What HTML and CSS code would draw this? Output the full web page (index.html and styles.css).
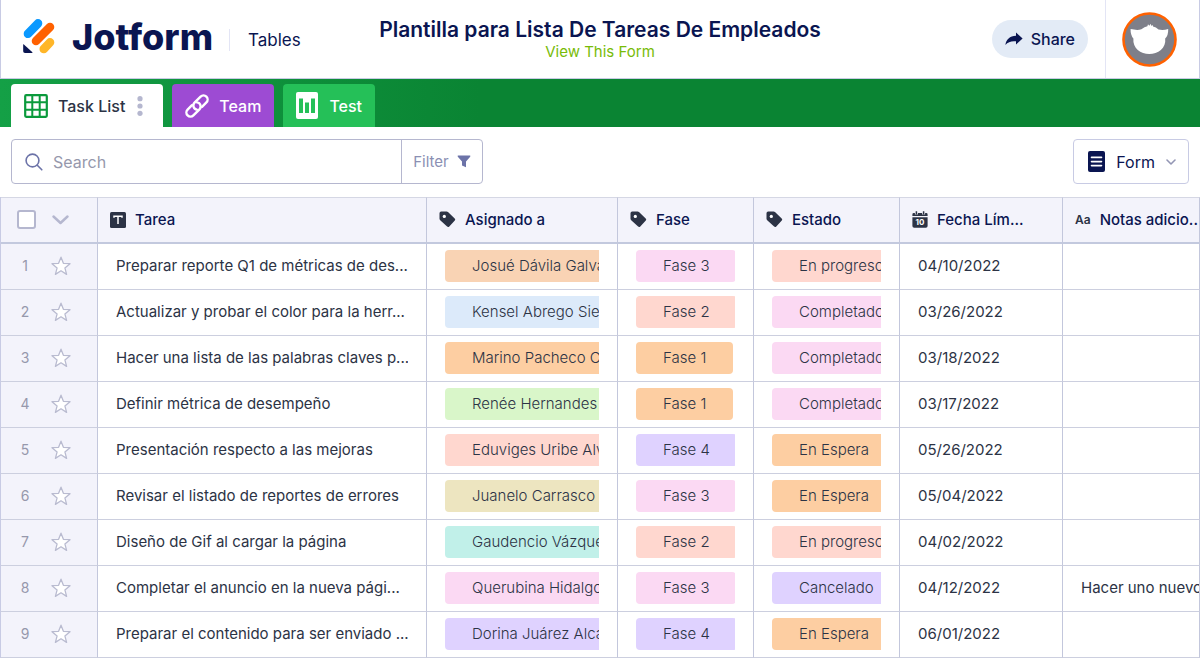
FILE: index.html
```
<!DOCTYPE html>
<html lang="es">
<head>
<meta charset="utf-8">
<meta name="viewport" content="width=device-width, initial-scale=1">
<title>Plantilla para Lista De Tareas De Empleados</title>
<link rel="stylesheet" href="styles.css">
</head>
<body>
<svg class="defs" width="0" height="0" aria-hidden="true">
  <symbol id="star" viewBox="0 0 20 20"><path d="M10 1.2 12.4 7.3 19 7.7 13.9 11.9 15.6 18.4 10 14.8 4.4 18.4 6.1 11.9 1 7.7 7.6 7.3Z" fill="#fff" stroke="#b9bbd0" stroke-width="1.3" stroke-linejoin="round"/></symbol>
  <symbol id="tag" viewBox="0 0 17 17"><path d="M2.2 0.5H7.6Q8.4 0.5 9 1.1L15.7 7.4Q16.8 8.5 15.8 9.6L10.3 15.4Q9.2 16.5 8.1 15.5L1.2 9.2Q0.5 8.6 0.5 7.7V2.2Q0.5 0.5 2.2 0.5Z" fill="#2c3345"/><circle cx="5.3" cy="5.4" r="1.6" fill="#fff"/></symbol>
</svg>

<header class="header">
  <a class="brand" href="#">
    <svg class="brand-mark" width="32" height="36" viewBox="0 0 32 36" aria-hidden="true">
      <g fill="none" stroke-width="8.6" stroke-linecap="round">
        <path d="M5 15.8 15 5.4" stroke="#0a99ff"/>
        <path d="M13 23 27 9" stroke="#ff6100"/>
        <path d="M20.8 31 27 24.4" stroke="#ffb629"/>
      </g>
      <path d="M0.6 26.2 9.4 34.2Q9.8 35 9 35H2Q0.2 35 0.2 33.2V26.6Q0.2 26 0.6 26.2Z" fill="#0a1551"/>
    </svg>
    <span class="brand-name">Jotform</span>
    <span class="brand-product">Tables</span>
  </a>
  <div class="heading">
    <h1 class="title">Plantilla para Lista De Tareas De Empleados</h1>
    <a class="subtitle" href="#">View This Form</a>
  </div>
  <div class="account">
    <button class="share" type="button">
      <svg width="18" height="14" viewBox="0 0 18 14" aria-hidden="true"><path d="M11 0.4 17.6 6.4 11 12.6V9.3C6.5 8.8 3 9.8 0.4 13C1 7.5 4.8 4 11 3.7Z" fill="#0a1551"/></svg>
      Share
    </button>
    <a class="avatar" href="#" aria-label="Account">
      <svg width="55" height="55" viewBox="0 0 55 55" aria-hidden="true">
        <circle cx="27.5" cy="27.5" r="26" fill="#7e7f89" stroke="#ff6100" stroke-width="2.6"/>
        <path d="M8.6 17C12.5 17.8 16 18.4 19.4 17.2Q22.5 14.7 25.4 14.2L26 12.2 27.3 13.7 28.8 11.8 29.2 13.8 31 13.2 31 14.6Q34 15.2 36.5 17.4C40 18.3 43 17.8 46.2 17Q46.4 23.5 43.2 26.6C44.4 36.5 35.8 42 27.3 42C18.8 42 10.4 36.5 11.4 26.6Q8.4 23.2 8.6 17Z" fill="#fff"/>
      </svg>
    </a>
  </div>
</header>

<nav class="tabs" aria-label="Tables">
  <div class="tab tab-active">
    <a class="tab-link" href="#">
      <svg width="24" height="24" viewBox="0 0 24 24" aria-hidden="true"><rect x="1.2" y="1.2" width="21.6" height="21.6" rx="1" fill="#fff" stroke="#0b9a3c" stroke-width="2.2"/><path d="M8.3 1V23M15.7 1V23M1 8.3H23M1 15.7H23" stroke="#0b9a3c" stroke-width="2"/></svg>
      Task List
    </a>
    <button class="tab-menu" type="button" aria-label="Tab options">
      <svg width="6" height="20" viewBox="0 0 6 20" fill="#b5b7cf" aria-hidden="true"><circle cx="3" cy="2.7" r="2.6"/><circle cx="3" cy="10" r="2.6"/><circle cx="3" cy="17.3" r="2.6"/></svg>
    </button>
  </div>
  <a class="tab tab-team" href="#">
    <svg width="24" height="24" viewBox="0 0 24 24" fill="none" stroke="#fff" stroke-width="2.4" stroke-linecap="round" aria-hidden="true"><g transform="rotate(-45 12 12)"><path d="M15 16.1H21.2A4.1 4.1 0 0 0 21.2 7.9H12.6A4.1 4.1 0 0 0 9.4 14.5"/><path d="M9 7.9H2.8A4.1 4.1 0 0 0 2.8 16.1H11.4A4.1 4.1 0 0 0 14.6 9.5"/></g></svg>
    Team
  </a>
  <a class="tab tab-test" href="#">
    <svg width="22" height="27" viewBox="0 0 22 27" aria-hidden="true"><rect width="22" height="27" rx="2" fill="#fff"/><path d="M3 6.5H7V21H3ZM9 10.5H13V21H9ZM15 6.5H19V21H15Z" fill="#25c058"/></svg>
    Test
  </a>
</nav>

<div class="toolbar">
  <div class="search">
    <label class="search-label" for="search">
      <svg width="18" height="18" viewBox="0 0 18 18" fill="none" stroke="#6c73a8" stroke-width="1.6" stroke-linecap="round" role="img" aria-label="Search"><circle cx="7.5" cy="7.5" r="6.4"/><path d="M12.3 12.3 16.8 16.8"/></svg>
    </label>
    <input class="search-input" id="search" type="text" placeholder="Search">
    <button class="filter" type="button">
      Filter
      <svg width="14" height="13" viewBox="0 0 14 13" aria-hidden="true"><path d="M1.2 0.5H12.8Q13.8 0.6 13.2 1.7L9 6.6V12.2L5 10.4V6.6L0.8 1.7Q0.2 0.6 1.2 0.5Z" fill="#6c73a8"/></svg>
    </button>
  </div>
  <button class="form-button" type="button">
    <svg width="17" height="21" viewBox="0 0 17 21" aria-hidden="true"><rect width="17" height="21" rx="2" fill="#0a1551"/><path d="M3.5 6.4H13.5M3.5 10.6H13.5M3.5 14.6H13.5" stroke="#fff" stroke-width="1.6" stroke-linecap="round"/></svg>
    Form
    <svg width="10" height="6" viewBox="0 0 10 6" fill="none" stroke="#9396b4" stroke-width="1.6" stroke-linecap="round" stroke-linejoin="round" aria-hidden="true"><path d="M1 1 5 5 9 1"/></svg>
  </button>
</div>

<table class="grid">
  <colgroup><col class="col-select"><col class="col-task"><col class="col-owner"><col class="col-phase"><col class="col-status"><col class="col-date"><col></colgroup>
  <thead>
    <tr>
      <th><div class="select-all"><input class="check" type="checkbox" aria-label="Select all"><button class="chevron" type="button" aria-label="Selection options"><svg width="17" height="10" viewBox="0 0 17 10" fill="none" stroke="#b5b7cf" stroke-width="2.4" stroke-linecap="round" stroke-linejoin="round" aria-hidden="true"><path d="M1.5 1.5 8.5 8 15.5 1.5"/></svg></button></div></th>
      <th scope="col"><div class="col-head"><svg width="16" height="16" viewBox="0 0 16 16" aria-hidden="true"><rect width="16" height="16" rx="1.5" fill="#2c3345"/><path d="M4 5.8V4.2H12V5.8M8 4.2V12" fill="none" stroke="#fff" stroke-width="1.5"/></svg>Tarea</div></th>
      <th scope="col"><div class="col-head"><svg width="17" height="17" aria-hidden="true"><use href="#tag"/></svg>Asignado a</div></th>
      <th scope="col"><div class="col-head"><svg width="17" height="17" aria-hidden="true"><use href="#tag"/></svg>Fase</div></th>
      <th scope="col"><div class="col-head"><svg width="17" height="17" aria-hidden="true"><use href="#tag"/></svg>Estado</div></th>
      <th scope="col"><div class="col-head"><span class="calendar"><svg width="16" height="17" viewBox="0 0 16 17" aria-hidden="true"><path d="M1.8 2H14.2Q15.6 2 15.6 3.4V5H0.4V3.4Q0.4 2 1.8 2ZM0.4 6.2H15.6V15Q15.6 16.8 13.8 16.8H2.2Q0.4 16.8 0.4 15Z" fill="#2c3345"/><path d="M4.4 0.4V3.4M11.6 0.4V3.4" stroke="#f3f3fb" stroke-width="3"/><path d="M4.4 0.2V3.6M11.6 0.2V3.6" stroke="#2c3345" stroke-width="1.5"/></svg><span class="calendar-day" aria-hidden="true">10</span></span>Fecha Lím...</div></th>
      <th scope="col"><div class="col-head"><span class="text-type" aria-hidden="true">Aa</span>Notas adicio..</div></th>
    </tr>
  </thead>
  <tbody>
    <tr><td><div class="row-head"><span class="num">1</span><button class="star" type="button" aria-label="Favorito 1"><svg width="20" height="20"><use href="#star"/></svg></button></div></td><td><div class="cell">Preparar reporte Q1 de métricas de des...</div></td><td><div class="cell"><span class="chip apricot">Josué Dávila Galvá</span></div></td><td><div class="cell"><span class="chip pink">Fase 3</span></div></td><td><div class="cell"><span class="chip salmon">En progreso</span></div></td><td><div class="cell">04/10/2022</div></td><td></td></tr>
    <tr><td><div class="row-head"><span class="num">2</span><button class="star" type="button" aria-label="Favorito 2"><svg width="20" height="20"><use href="#star"/></svg></button></div></td><td><div class="cell">Actualizar y probar el color para la herr...</div></td><td><div class="cell"><span class="chip blue">Kensel Abrego Sier</span></div></td><td><div class="cell"><span class="chip salmon">Fase 2</span></div></td><td><div class="cell"><span class="chip pink">Completado</span></div></td><td><div class="cell">03/26/2022</div></td><td></td></tr>
    <tr><td><div class="row-head"><span class="num">3</span><button class="star" type="button" aria-label="Favorito 3"><svg width="20" height="20"><use href="#star"/></svg></button></div></td><td><div class="cell">Hacer una lista de las palabras claves p...</div></td><td><div class="cell"><span class="chip orange">Marino Pacheco C</span></div></td><td><div class="cell"><span class="chip orange">Fase 1</span></div></td><td><div class="cell"><span class="chip pink">Completado</span></div></td><td><div class="cell">03/18/2022</div></td><td></td></tr>
    <tr><td><div class="row-head"><span class="num">4</span><button class="star" type="button" aria-label="Favorito 4"><svg width="20" height="20"><use href="#star"/></svg></button></div></td><td><div class="cell">Definir métrica de desempeño</div></td><td><div class="cell"><span class="chip green">Renée Hernandes F</span></div></td><td><div class="cell"><span class="chip orange">Fase 1</span></div></td><td><div class="cell"><span class="chip pink">Completado</span></div></td><td><div class="cell">03/17/2022</div></td><td></td></tr>
    <tr><td><div class="row-head"><span class="num">5</span><button class="star" type="button" aria-label="Favorito 5"><svg width="20" height="20"><use href="#star"/></svg></button></div></td><td><div class="cell">Presentación respecto a las mejoras</div></td><td><div class="cell"><span class="chip salmon">Eduviges Uribe Alva</span></div></td><td><div class="cell"><span class="chip violet">Fase 4</span></div></td><td><div class="cell"><span class="chip orange">En Espera</span></div></td><td><div class="cell">05/26/2022</div></td><td></td></tr>
    <tr><td><div class="row-head"><span class="num">6</span><button class="star" type="button" aria-label="Favorito 6"><svg width="20" height="20"><use href="#star"/></svg></button></div></td><td><div class="cell">Revisar el listado de reportes de errores</div></td><td><div class="cell"><span class="chip khaki">Juanelo Carrasco C</span></div></td><td><div class="cell"><span class="chip pink">Fase 3</span></div></td><td><div class="cell"><span class="chip orange">En Espera</span></div></td><td><div class="cell">05/04/2022</div></td><td></td></tr>
    <tr><td><div class="row-head"><span class="num">7</span><button class="star" type="button" aria-label="Favorito 7"><svg width="20" height="20"><use href="#star"/></svg></button></div></td><td><div class="cell">Diseño de Gif al cargar la página</div></td><td><div class="cell"><span class="chip teal">Gaudencio Vázque</span></div></td><td><div class="cell"><span class="chip salmon">Fase 2</span></div></td><td><div class="cell"><span class="chip salmon">En progreso</span></div></td><td><div class="cell">04/02/2022</div></td><td></td></tr>
    <tr><td><div class="row-head"><span class="num">8</span><button class="star" type="button" aria-label="Favorito 8"><svg width="20" height="20"><use href="#star"/></svg></button></div></td><td><div class="cell">Completar el anuncio en la nueva pági...</div></td><td><div class="cell"><span class="chip pink">Querubina Hidalgo</span></div></td><td><div class="cell"><span class="chip pink">Fase 3</span></div></td><td><div class="cell"><span class="chip violet">Cancelado</span></div></td><td><div class="cell">04/12/2022</div></td><td><div class="cell cell-last">Hacer uno nuevo</div></td></tr>
    <tr><td><div class="row-head"><span class="num">9</span><button class="star" type="button" aria-label="Favorito 9"><svg width="20" height="20"><use href="#star"/></svg></button></div></td><td><div class="cell">Preparar el contenido para ser enviado ...</div></td><td><div class="cell"><span class="chip violet">Dorina Juárez Alca</span></div></td><td><div class="cell"><span class="chip violet">Fase 4</span></div></td><td><div class="cell"><span class="chip orange">En Espera</span></div></td><td><div class="cell">06/01/2022</div></td><td></td></tr>
  </tbody>
</table>
</body>
</html>
```
FILE: styles.css
```
* { box-sizing: border-box; }

body {
  margin: 0;
  background: #fff;
  color: #2c3345;
  font-family: Inter, "Open Sans", sans-serif;
  font-size: 15px;
  line-height: 20px;
}

button, input { font: inherit; color: inherit; }
button { padding: 0; border: 0; background: none; cursor: pointer; }
a { color: inherit; text-decoration: none; }
svg { display: block; flex: none; }
.defs { position: absolute; }

/* Header */
.header {
  display: grid;
  grid-template-columns: 1fr auto 1fr;
  height: 79px;
  border: 1px solid #c8cbe4;
  border-top: 0;
}
.brand {
  display: flex;
  align-items: center;
  align-self: start;
  height: 72px;
  padding-left: 22px;
  color: #0a1551;
}
.brand-name {
  margin: 2px 0 0 17px;
  font-size: 36px;
  font-weight: 800;
  line-height: 40px;
}
.brand-product {
  margin: 8px 0 0 16px;
  padding-left: 18px;
  border-left: 1px solid #e3e5f5;
  font-size: 17px;
  line-height: 22px;
}
.heading { padding-top: 18px; text-align: center; }
.title {
  margin: 0;
  color: #0a1551;
  font-size: 21px;
  font-weight: 600;
  line-height: 24px;
}
.subtitle { display: block; color: #78bb07; line-height: 20px; }
.account { display: flex; justify-content: flex-end; align-items: stretch; }
.share {
  display: flex;
  align-items: center;
  align-self: center;
  gap: 8px;
  height: 38px;
  margin-right: 17px;
  padding: 0 13px;
  border-radius: 19px;
  background: #e3ebf6;
  color: #0a1551;
  font-size: 16px;
  font-weight: 500;
}
.avatar {
  display: flex;
  align-items: center;
  padding: 0 22px 0 16px;
  border-left: 1px solid #e3e5f5;
}

/* Tabs */
.tabs {
  display: flex;
  align-items: flex-end;
  gap: 9px;
  height: 48px;
  padding: 0 11px;
  background: linear-gradient(90deg, #14a046, #0a8433 480px);
  color: #fff;
  font-size: 16px;
  font-weight: 500;
}
.tab {
  display: flex;
  align-items: center;
  gap: 10px;
  height: 43px;
  padding: 0 13px;
  border-radius: 4px 4px 0 0;
}
.tab-link { display: flex; align-items: center; gap: 10px; }
.tab-active { gap: 12px; padding-right: 20px; background: #fff; color: #2c3345; }
.tab-team { background: #9d4bd3; }
.tab-test { gap: 11px; background: #25c058; }

/* Toolbar */
.toolbar {
  display: flex;
  justify-content: space-between;
  height: 70px;
  padding: 12px 11px 13px;
}
.search {
  display: flex;
  width: 472px;
  border: 1px solid #b5b7cf;
  border-radius: 4px;
}
.search-label { display: flex; align-items: center; padding: 0 10px 0 13px; }
.search-input {
  flex: 1;
  min-width: 0;
  padding: 0;
  border: 0;
  outline: 0;
  background: none;
  font-size: 16px;
}
.search-input::placeholder { color: #9698ac; opacity: 1; }
.filter {
  display: flex;
  align-items: center;
  justify-content: center;
  gap: 8px;
  width: 81px;
  border-left: 1px solid #b5b7cf;
  color: #8b8fb3;
}
.form-button {
  display: flex;
  align-items: center;
  gap: 11px;
  padding: 0 12px 0 14px;
  border: 1px solid #c8cbe4;
  border-radius: 4px;
  color: #0a1551;
  font-size: 16px;
}

/* Records */
.grid {
  width: 100%;
  table-layout: fixed;
  border-collapse: separate;
  border-spacing: 0;
  border-left: 1px solid #c8cbe4;
}
.col-select { width: 97px; }
.col-task { width: 329px; }
.col-owner { width: 191px; }
.col-phase { width: 136px; }
.col-status { width: 146px; }
.col-date { width: 163px; }
.grid th, .grid td {
  height: 46px;
  padding: 0 0 1px;
  border-right: 1px solid #c3c7dc;
  border-bottom: 1px solid #cccfdf;
  vertical-align: middle;
  overflow: hidden;
}
.grid th {
  height: 47px;
  border-top: 1px solid #d5d7e4;
  border-bottom: 2px solid #c3c9de;
  background: #f3f3fb;
  color: #0a1551;
  font-weight: 500;
  text-align: left;
}
.grid td:first-child { background: #f3f3fb; }
.col-head {
  display: flex;
  align-items: center;
  gap: 9px;
  padding-left: 12px;
  white-space: nowrap;
}
.select-all { display: flex; align-items: center; gap: 16px; padding-left: 16px; }
.check {
  appearance: none;
  width: 19px;
  height: 19px;
  margin: 0;
  border: 2px solid #b5b7cf;
  border-radius: 3px;
  background: #fff;
}
.row-head { display: flex; align-items: center; gap: 18px; padding-left: 16px; }
.num { width: 16px; color: #9698ac; font-size: 14px; text-align: center; }
.cell {
  margin: 0 18px;
  overflow: hidden;
  white-space: nowrap;
}
.cell-last { margin-right: 0; }
.calendar { position: relative; }
.calendar-day {
  position: absolute;
  inset: 7px 0 auto;
  color: #fff;
  font-size: 8px;
  font-weight: 700;
  line-height: 8px;
  text-align: center;
}
.text-type { color: #2c3345; font-size: 12px; font-weight: 600; }

.chip {
  display: block;
  width: max-content;
  padding: 0 27px;
  border-radius: 4px;
  font-weight: 300;
  line-height: 32px;
}
.apricot { background: #f9d3b4; }
.pink { background: #fbd9f3; }
.salmon { background: #ffd7cf; }
.blue { background: #dceafa; }
.orange { background: #fdcea2; }
.green { background: #d9f6c9; }
.violet { background: #dfd2ff; }
.khaki { background: #ede5c0; }
.teal { background: #c1f0e9; }
```
